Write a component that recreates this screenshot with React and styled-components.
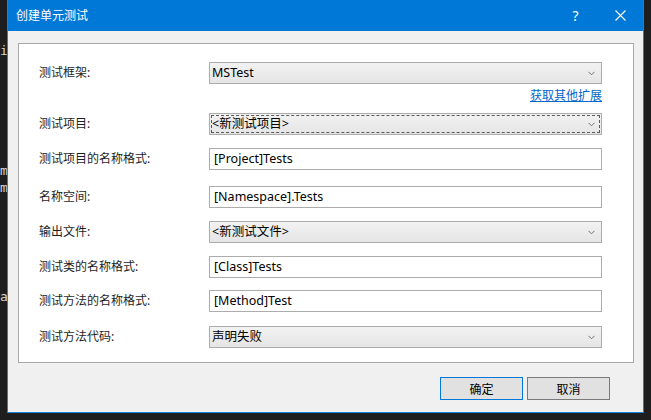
import React from "react";
import styled, { createGlobalStyle } from "styled-components";

const GlobalStyle = createGlobalStyle`
  html, body {
    margin: 0;
    padding: 0;
    background: #1e1e1e;
  }
  body {
    font-family: "Noto Sans", "Noto Sans CJK SC", sans-serif;
    font-size: 12px;
  }
`;

const Page = styled.div`
  display: flex;
  flex-direction: row;
  align-items: flex-start;
  width: 651px;
  height: 420px;
  overflow: hidden;
  background: #1e1e1e;
`;

const Backdrop = styled.div`
  display: flex;
  flex-direction: column;
  width: 7px;
  overflow: hidden;
  font-family: "DejaVu Sans Mono", monospace;
  font-size: 13px;
  line-height: 14px;
  color: #d4d4d4;
`;

const BackdropLine = styled.div`
  margin-top: ${(p) => p.$gap}px;
  height: 14px;
  white-space: pre;
`;

const Dialog = styled.div`
  display: flex;
  flex-direction: column;
  width: 635px;
  height: 412px;
  border: 1px solid #1a82d8;
  border-top: none;
  background: #f0f0f0;
`;

const TitleBar = styled.div`
  display: flex;
  align-items: center;
  height: 31px;
  background: #0078d7;
  color: #ffffff;
`;

const Title = styled.div`
  flex: 1;
  padding-left: 8px;
  font-size: 12px;
  line-height: 16px;
`;

const TitleButton = styled.div`
  display: flex;
  align-items: center;
  justify-content: center;
  width: 45px;
  height: 31px;
  font-size: 14px;
  color: #ffffff;
`;

const Body = styled.div`
  display: flex;
  flex-direction: column;
  padding: 12px 9px 0 10px;
`;

const Panel = styled.div`
  display: flex;
  flex-direction: column;
  box-sizing: border-box;
  width: 616px;
  height: 320px;
  padding: 18px 0 0 20px;
  background: #ffffff;
  border: 1px solid #a9a9a9;
`;

const FieldRow = styled.div`
  display: flex;
  align-items: center;
  margin-top: ${(p) => p.$gap || 0}px;
  height: 22px;
`;

const Label = styled.div`
  width: 170px;
  color: #1e1e1e;
  font-size: 12px;
  line-height: 16px;
`;

const Combo = styled.div`
  position: relative;
  display: flex;
  align-items: center;
  box-sizing: border-box;
  width: 393px;
  height: 22px;
  padding: 0 6px 0 2px;
  border: 1px solid #acacac;
  background: linear-gradient(#f2f2f2, #e5e5e5);
  color: #000000;
  font-size: 12.5px;
  line-height: 16px;

  &::after {
    content: "";
    display: ${(p) => (p.$focused ? "block" : "none")};
    position: absolute;
    inset: 1px;
    border: 1px dashed #5a5a5a;
    pointer-events: none;
  }
`;

const ComboText = styled.span`
  flex: 1;
`;

const TextBox = styled.div`
  display: flex;
  align-items: center;
  box-sizing: border-box;
  width: 393px;
  height: 22px;
  padding: 0 4px;
  border: 1px solid #acacac;
  background: #ffffff;
  color: #000000;
  font-size: 12.5px;
  line-height: 16px;
`;

const LinkRow = styled.div`
  display: flex;
  justify-content: flex-end;
  width: 563px;
  padding-top: 4px;
  height: 16px;
  margin-bottom: 9px;
`;

const Link = styled.a`
  color: #0066cc;
  text-decoration: underline;
  font-size: 12px;
  line-height: 16px;
  cursor: pointer;
`;

const ButtonRow = styled.div`
  display: flex;
  justify-content: flex-end;
  gap: 4px;
  padding-right: 24px;
  margin-top: 14px;
`;

const Button = styled.button`
  box-sizing: border-box;
  width: 83px;
  height: 23px;
  padding: 0;
  border: 1px solid ${(p) => (p.$primary ? "#0078d7" : "#7a7a7a")};
  background: #e1e1e1;
  color: #000000;
  font-family: "Noto Sans CJK SC", sans-serif;
  font-size: 12px;
  line-height: 16px;
`;

const Chevron = () => (
  <svg width="7" height="5" viewBox="0 0 7 5">
    <path d="M0.5 0.8 L3.5 3.8 L6.5 0.8" fill="none" stroke="#707070" strokeWidth="1" />
  </svg>
);

const CloseIcon = () => (
  <svg width="11" height="11" viewBox="0 0 11 11">
    <path d="M0.5 0.5 L10.5 10.5 M10.5 0.5 L0.5 10.5" stroke="#ffffff" strokeWidth="1.1" />
  </svg>
);

const fields = [
  { label: "测试框架:", kind: "combo", value: "MSTest", gap: 0 },
  { label: "测试项目:", kind: "combo", value: "<新测试项目>", focused: true, gap: 0 },
  { label: "测试项目的名称格式:", kind: "text", value: "[Project]Tests", gap: 13 },
  { label: "名称空间:", kind: "text", value: "[Namespace].Tests", gap: 16 },
  { label: "输出文件:", kind: "combo", value: "<新测试文件>", gap: 13 },
  { label: "测试类的名称格式:", kind: "text", value: "[Class]Tests", gap: 13 },
  { label: "测试方法的名称格式:", kind: "text", value: "[Method]Test", gap: 12 },
  { label: "测试方法代码:", kind: "combo", value: "声明失败", gap: 14 },
];

const backdrop = [
  { text: "i", gap: 44 },
  { text: "m", gap: 106 },
  { text: "m", gap: 3 },
  { text: "a", gap: 95 },
];

export default function App() {
  return (
    <>
      <GlobalStyle />
      <Page>
        <Backdrop>
          {backdrop.map((l, i) => (
            <BackdropLine key={i} $gap={l.gap}>
              {l.text}
            </BackdropLine>
          ))}
        </Backdrop>
        <Dialog>
          <TitleBar>
            <Title>创建单元测试</Title>
            <TitleButton>?</TitleButton>
            <TitleButton>
              <CloseIcon />
            </TitleButton>
          </TitleBar>
          <Body>
            <Panel>
              {fields.map((f, i) => (
                <React.Fragment key={i}>
                  <FieldRow $gap={f.gap}>
                    <Label>{f.label}</Label>
                    {f.kind === "combo" ? (
                      <Combo $focused={f.focused}>
                        <ComboText>{f.value}</ComboText>
                        <Chevron />
                      </Combo>
                    ) : (
                      <TextBox>{f.value}</TextBox>
                    )}
                  </FieldRow>
                  {i === 0 && (
                    <LinkRow>
                      <Link>获取其他扩展</Link>
                    </LinkRow>
                  )}
                </React.Fragment>
              ))}
            </Panel>
            <ButtonRow>
              <Button $primary>确定</Button>
              <Button>取消</Button>
            </ButtonRow>
          </Body>
        </Dialog>
      </Page>
    </>
  );
}
